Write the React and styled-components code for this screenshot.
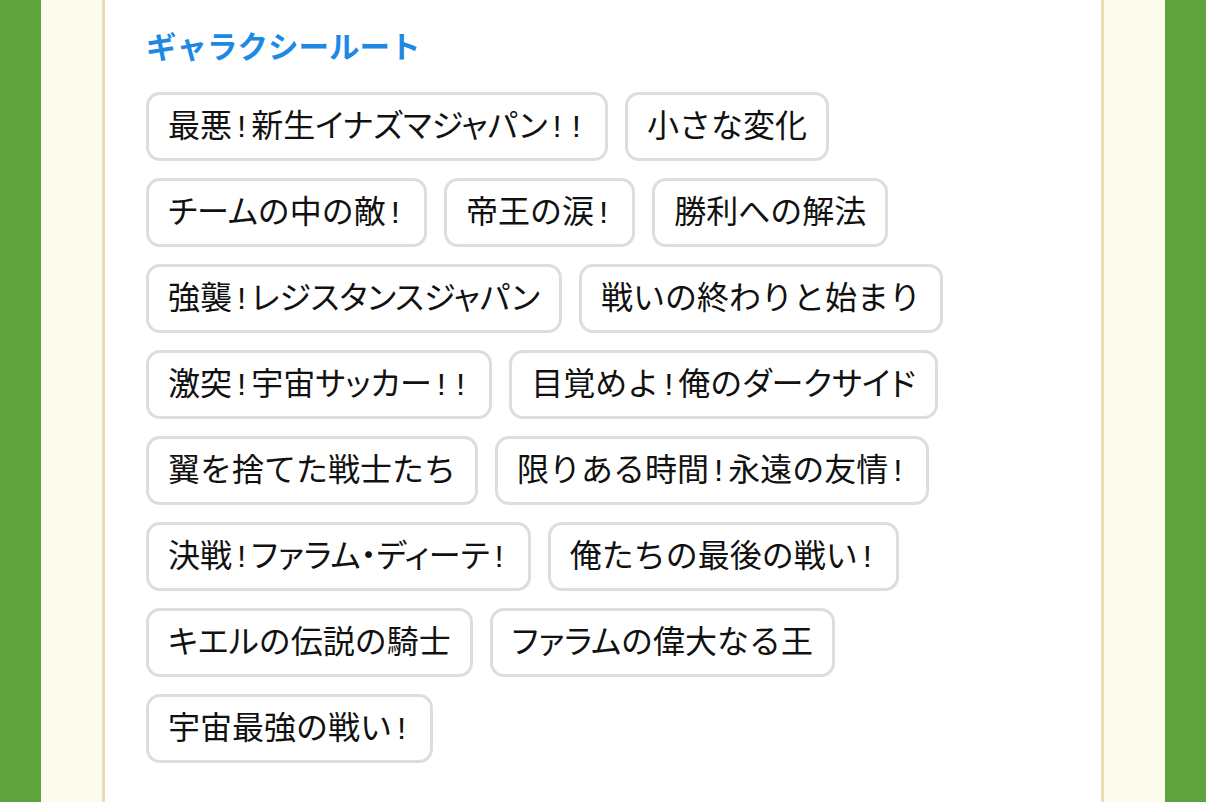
import React from "react";
import styled, { createGlobalStyle } from "styled-components";

const Global = createGlobalStyle`
  html, body { margin: 0; padding: 0; }
  body {
    background: #5fa33e;
    font-family: "Noto Sans CJK JP", "Noto Sans", sans-serif;
  }
`;

const Page = styled.div`
  min-height: 802px;
  margin: 0 41px;
  padding: 0 61px;
  background: #fdfbee;
  display: flex;
`;

const Panel = styled.main`
  flex: 1;
  min-height: 802px;
  background: #ffffff;
  border-left: 3px solid #e8ddb5;
  border-right: 3px solid #e8ddb5;
  padding: 23px 41px 30px;
  box-sizing: border-box;
`;

const Title = styled.h2`
  margin: 0 0 24px;
  font-size: 30.5px;
  line-height: 45px;
  font-weight: 700;
  color: #1e88e5;
`;

const Rows = styled.div`
  display: flex;
  flex-direction: column;
  gap: 17px;
`;

const Row = styled.div`
  display: flex;
  gap: 17px;
`;

const Tag = styled.span`
  box-sizing: border-box;
  border: 3px solid #dddddd;
  border-radius: 14px;
  padding: 11px 19px 7px;
  font-family: "Liberation Mono", "Noto Sans CJK JP", sans-serif;
  font-size: 32px;
  line-height: 45px;
  color: #111111;
  background: #fff;
  white-space: nowrap;
`;

const Kana = styled.span`
  font-feature-settings: "palt";
`;

const rows = [
  ["最悪!新生イナズマジャパン!!", "小さな変化"],
  ["チームの中の敵!", "帝王の涙!", "勝利への解法"],
  ["強襲!レジスタンスジャパン", "戦いの終わりと始まり"],
  ["激突!宇宙サッカー!!", "目覚めよ!俺のダークサイド"],
  ["翼を捨てた戦士たち", "限りある時間!永遠の友情!"],
  ["決戦!ファラム・ディーテ!", "俺たちの最後の戦い!"],
  ["キエルの伝説の騎士", "ファラムの偉大なる王"],
  ["宇宙最強の戦い!"],
];

const splitKana = (text) =>
  text.split(/([\u30A0-\u30FF]+)/).filter(Boolean);

const isKana = (s) => /^[\u30A0-\u30FF]+$/.test(s);

export default function App() {
  return (
    <>
      <Global />
      <Page>
        <Panel>
          <Title>ギャラクシールート</Title>
          <Rows>
            {rows.map((r, i) => (
              <Row key={i}>
                {r.map((t) => (
                  <Tag key={t}>
                    {splitKana(t).map((part, j) =>
                      isKana(part) ? <Kana key={j}>{part}</Kana> : part
                    )}
                  </Tag>
                ))}
              </Row>
            ))}
          </Rows>
        </Panel>
      </Page>
    </>
  );
}
